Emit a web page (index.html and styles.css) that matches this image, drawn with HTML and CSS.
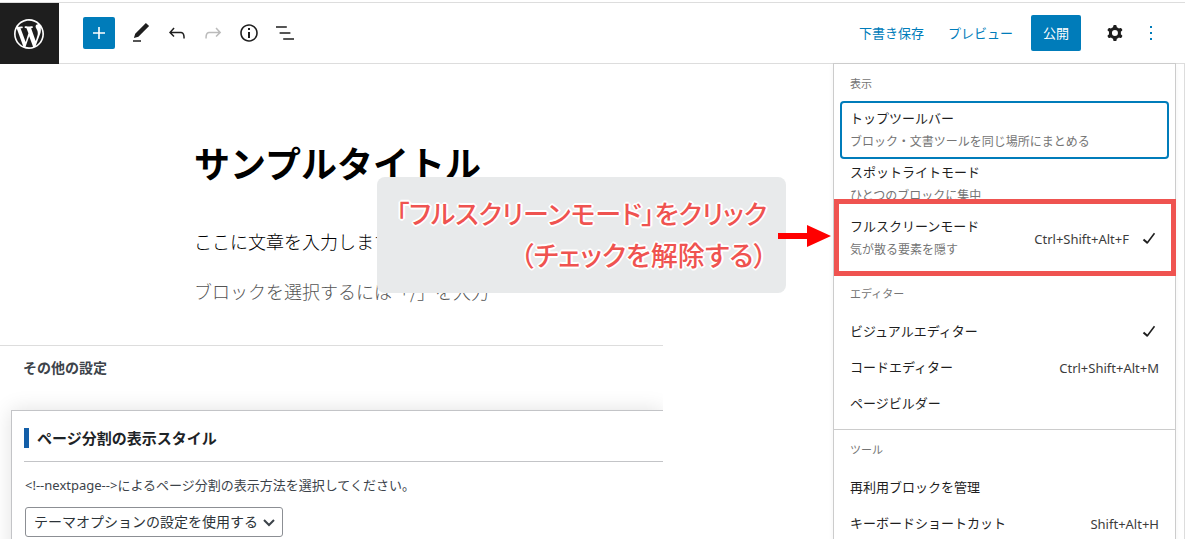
FILE: index.html
```html
<!DOCTYPE html>
<html lang="ja">
<head>
<meta charset="utf-8">
<meta name="viewport" content="width=device-width, initial-scale=1">
<title>サンプルタイトル</title>
<link rel="stylesheet" href="styles.css">
</head>
<body>
<header class="toolbar">
  <a class="logo" href="#" aria-label="WordPress">
    <svg width="36" height="36" viewBox="-2 -2 24 24" fill="currentColor"><path d="M20 10c0-5.51-4.49-10-10-10C4.48 0 0 4.49 0 10c0 5.52 4.48 10 10 10 5.51 0 10-4.48 10-10zM7.78 15.37L4.37 6.22c.55-.02 1.17-.08 1.17-.08.5-.06.44-1.13-.06-1.11 0 0-1.45.11-2.37.11-.18 0-.37 0-.58-.01C4.12 2.69 6.87 1.11 10 1.11c2.33 0 4.45.87 6.05 2.34-.68-.11-1.65.39-1.65 1.58 0 .74.45 1.36.9 2.1.35.61.55 1.36.55 2.46 0 1.49-1.4 5-1.4 5l-3.03-8.37c.54-.02.82-.17.82-.17.5-.05.44-1.25-.06-1.22 0 0-1.44.12-2.38.12-.87 0-2.33-.12-2.33-.12-.5-.03-.56 1.2-.06 1.22l.92.08 1.26 3.41zM17.41 10c.24-.64.74-1.87.43-4.25.7 1.29 1.05 2.71 1.05 4.25 0 3.29-1.73 6.24-4.4 7.78.97-2.59 1.94-5.2 2.92-7.78zM6.1 18.09C3.12 16.65 1.11 13.53 1.11 10c0-1.3.23-2.48.72-3.59C3.25 10.3 4.67 14.2 6.1 18.09zm4.03-6.63l2.58 6.98c-.86.29-1.76.45-2.71.45-.79 0-1.57-.11-2.29-.33.81-2.38 1.62-4.74 2.42-7.1z"/></svg>
  </a>
  <div class="tools">
    <button class="add" type="button" aria-label="ブロックを追加"><svg width="24" height="24" viewBox="0 0 24 24" fill="currentColor"><path d="M18 11.2h-5.2V6h-1.6v5.2H6v1.6h5.2V18h1.6v-5.2H18z"/></svg></button>
    <div class="group">
      <button class="icon" type="button" aria-label="ツール"><svg width="24" height="24" viewBox="0 0 24 24" fill="currentColor"><path d="M20.1 5.1L16.9 2 6.2 12.7l-1.3 4.4 4.5-1.3L20.1 5.1zM4 20.8h8v-1.5H4v1.5z"/></svg></button>
      <button class="icon" type="button" aria-label="元に戻す"><svg width="24" height="24" viewBox="0 0 24 24" fill="currentColor"><path d="M18.3 11.7c-.6-.6-1.4-.9-2.3-.9H6.7l2.9-3.3-1.1-1-4.5 5L8.5 16l1-1-2.7-2.7H16c.5 0 .9.2 1.3.5 1 1 1 3.4 1 4.5v.3h1.5v-.2c0-1.5 0-4.3-1.5-5.7z"/></svg></button>
      <button class="icon" type="button" aria-label="やり直す" disabled><svg width="24" height="24" viewBox="0 0 24 24" fill="currentColor"><path d="M15.6 6.5l-1.1 1 2.9 3.3H8c-.9 0-1.7.3-2.3.9-1.4 1.5-1.4 4.2-1.4 5.6v.2h1.5v-.3c0-1.1 0-3.5 1-4.5.3-.3.7-.5 1.3-.5h9.2L14.5 15l1.1 1.1 4.6-4.6-4.6-5z"/></svg></button>
      <button class="icon" type="button" aria-label="詳細"><svg width="24" height="24" viewBox="0 0 24 24" fill="currentColor"><path d="M12 3.2c-4.8 0-8.8 3.9-8.8 8.8 0 4.8 3.9 8.8 8.8 8.8 4.8 0 8.8-3.9 8.8-8.8 0-4.8-4-8.8-8.8-8.8zm0 16c-4 0-7.2-3.3-7.2-7.2C4.8 8 8 4.8 12 4.8s7.2 3.3 7.2 7.2c0 4-3.2 7.2-7.2 7.2zM11 17h2v-6h-2v6zm0-8h2V7h-2v2z"/></svg></button>
      <button class="icon" type="button" aria-label="リスト表示"><svg width="24" height="24" viewBox="0 0 24 24" fill="currentColor"><path d="M13.8 5.2H3v1.5h10.8V5.2zm-3.6 12v1.5H21v-1.5H10.2zm7.2-6H6.6v1.5h10.8v-1.5z"/></svg></button>
    </div>
  </div>
  <div class="actions">
    <button class="text-button" type="button">下書き保存</button>
    <button class="text-button" type="button">プレビュー</button>
    <button class="publish" type="button">公開</button>
    <div class="group">
      <button class="icon" type="button" aria-label="設定"><svg width="24" height="24" viewBox="0 0 24 24" fill="currentColor"><path fill-rule="evenodd" d="M10.289 4.836A1 1 0 0111.275 4h1.306a1 1 0 01.987.836l.244 1.466c.787.26 1.503.679 2.108 1.218l1.393-.522a1 1 0 011.216.437l.653 1.13a1 1 0 01-.23 1.273l-1.148.944a6.025 6.025 0 010 2.435l1.149.946a1 1 0 01.23 1.272l-.653 1.13a1 1 0 01-1.216.437l-1.394-.522c-.605.54-1.32.958-2.108 1.218l-.244 1.466a1 1 0 01-.987.836h-1.306a1 1 0 01-.986-.836l-.244-1.466a5.995 5.995 0 01-2.108-1.218l-1.394.522a1 1 0 01-1.217-.436l-.653-1.131a1 1 0 01.23-1.272l1.149-.946a6.026 6.026 0 010-2.435l-1.148-.944a1 1 0 01-.23-1.272l.653-1.131a1 1 0 011.217-.437l1.393.522a5.994 5.994 0 012.108-1.218l.244-1.466zM14.929 12a3 3 0 11-6 0 3 3 0 016 0z"/></svg></button>
      <button class="icon icon-active" type="button" aria-label="オプション" aria-expanded="true"><svg width="24" height="24" viewBox="0 0 24 24" fill="currentColor"><path d="M13 19h-2v-2h2v2zm0-6h-2v-2h2v2zm0-6h-2V5h2v2z"/></svg></button>
    </div>
  </div>
</header>

<main class="workspace">
  <article class="post">
    <h1 class="post-title">サンプルタイトル</h1>
    <p class="paragraph">ここに文章を入力します。</p>
    <p class="paragraph placeholder">ブロックを選択するには「/」を入力</p>
  </article>

  <section class="settings">
    <h2 class="settings-title">その他の設定</h2>
    <div class="panel">
      <h3 class="panel-title">ページ分割の表示スタイル</h3>
      <label class="description" for="paging">&lt;!--nextpage--&gt;によるページ分割の表示方法を選択してください。</label>
      <div class="select-wrap">
        <select class="select" id="paging"><option>テーマオプションの設定を使用する</option></select>
        <svg class="chevron" width="14" height="14" viewBox="0 0 14 14" fill="none" stroke="currentColor" stroke-width="2"><path d="M2 5l5 5 5-5"/></svg>
      </div>
    </div>
  </section>

  <div class="menu" role="menu">
    <section class="menu-section">
      <h2 class="menu-heading">表示</h2>
      <button class="item item-tall item-focus" type="button" role="menuitemcheckbox" aria-checked="false"><span class="item-text"><span>トップツールバー</span><span class="info">ブロック・文書ツールを同じ場所にまとめる</span></span></button>
      <button class="item item-tall" type="button" role="menuitemcheckbox" aria-checked="false"><span class="item-text"><span>スポットライトモード</span><span class="info">ひとつのブロックに集中</span></span></button>
      <button class="item item-tall item-marked" type="button" role="menuitemcheckbox" aria-checked="true"><span class="item-text"><span>フルスクリーンモード</span><span class="info">気が散る要素を隠す</span></span><span class="shortcut">Ctrl+Shift+Alt+F</span><svg class="check" width="20" height="20" viewBox="0 0 20 20" fill="none" stroke="currentColor"><path stroke-width="2" d="M4.5 11.5l4 3.5"/><path stroke-width="1.5" d="M8 15.2l7.5-10"/></svg></button>
    </section>
    <section class="menu-section">
      <h2 class="menu-heading">エディター</h2>
      <button class="item" type="button" role="menuitemradio" aria-checked="true"><span class="item-text">ビジュアルエディター</span><svg class="check" width="20" height="20" viewBox="0 0 20 20" fill="none" stroke="currentColor"><path stroke-width="2" d="M4.5 11.5l4 3.5"/><path stroke-width="1.5" d="M8 15.2l7.5-10"/></svg></button>
      <button class="item" type="button" role="menuitemradio" aria-checked="false"><span class="item-text">コードエディター</span><span class="shortcut">Ctrl+Shift+Alt+M</span></button>
      <button class="item" type="button" role="menuitem"><span class="item-text">ページビルダー</span></button>
    </section>
    <section class="menu-section">
      <h2 class="menu-heading">ツール</h2>
      <button class="item" type="button" role="menuitem"><span class="item-text">再利用ブロックを管理</span></button>
      <button class="item" type="button" role="menuitem"><span class="item-text">キーボードショートカット</span><span class="shortcut">Shift+Alt+H</span></button>
    </section>
  </div>

  <div class="callout">
    <p class="callout-line">「フルスクリーンモード」をクリック</p>
    <p class="callout-line callout-note">（チェックを解除する）</p>
    <svg class="arrow" width="53" height="22" viewBox="0 0 53 22" fill="#f00"><path d="M0 8h29V0l24 11-24 11v-8H0z"/></svg>
  </div>
</main>
</body>
</html>
```

FILE: styles.css
```css
* {
  box-sizing: border-box;
}

body {
  display: flex;
  flex-direction: column;
  height: 100vh;
  margin: 0;
  padding-top: 2px;
  overflow: hidden;
  background: #fff;
  color: #1e1e1e;
  font-family: "Noto Sans", "Noto Sans CJK JP", sans-serif;
  font-size: 13px;
}

h1,
h2,
h3,
p {
  margin: 0;
}

button {
  margin: 0;
  padding: 0;
  border: 0;
  background: none;
  color: inherit;
  font: inherit;
}

svg {
  display: block;
  flex: none;
}

.toolbar {
  display: flex;
  flex: none;
  height: 62px;
  border-top: 1px solid #ddd;
  border-bottom: 1px solid #ddd;
}

.logo {
  display: flex;
  align-items: center;
  width: 59px;
  height: 61px;
  padding-left: 11px;
  background: #1e1e1e;
  color: #fff;
}

.tools {
  display: flex;
  align-items: center;
  gap: 8px;
  padding-left: 24px;
}

.group {
  display: flex;
}

.add,
.icon {
  display: grid;
  place-items: center;
}

.add {
  width: 32px;
  height: 32px;
  border-radius: 2px;
  background: #007cba;
  color: #fff;
}

.icon {
  width: 36px;
  height: 36px;
}

.icon:disabled {
  color: #bbb;
}

.icon-active {
  color: #007cba;
}

.actions {
  display: flex;
  align-items: center;
  margin-left: auto;
  padding-right: 16px;
}

.text-button {
  margin-right: 24px;
  padding-bottom: 2px;
  color: #007cba;
}

.text-button + .publish {
  margin-left: -6px;
}

.publish {
  height: 36px;
  margin-right: 16px;
  padding: 0 12px 2px;
  border-radius: 2px;
  background: #007cba;
  color: #fff;
}

.workspace {
  position: relative;
  flex: 1;
  min-height: 0;
  border-right: 1px solid #ddd;
}

.post {
  height: 281px;
  padding: 73px 0 0 194px;
  color: #000;
}

.post-title {
  margin-bottom: 34px;
  font-size: 36px;
  line-height: 56px;
}

.paragraph {
  margin-bottom: 22px;
  font-family: "Noto Sans CJK JP", sans-serif;
  font-size: 18px;
  font-weight: 300;
  line-height: 28px;
}

.placeholder {
  color: #555;
}

.settings {
  width: 56%;
  overflow: hidden;
  border-top: 1px solid #ddd;
  color: #3c434a;
}

.settings-title {
  padding: 10px 23px 30px;
  font-size: 14px;
  line-height: 24px;
}

.panel {
  margin-left: 11px;
  padding: 15px 0 24px 12px;
  border: 1px solid #c3c4c7;
  border-right: 0;
  box-shadow: 0 0 20px rgba(0, 0, 0, 0.12);
}

.panel-title {
  display: flex;
  align-items: center;
  gap: 8px;
  padding-bottom: 11px;
  border-bottom: 1px solid #c3c4c7;
  color: #1d2327;
  font-size: 15px;
  line-height: 24px;
}

.panel-title::before {
  width: 5px;
  height: 20px;
  background: #135ea8;
  content: "";
}

.description {
  display: block;
  padding: 11px 0 10px 1px;
  line-height: 24px;
}

.select-wrap {
  position: relative;
  width: 258px;
  margin-left: 1px;
}

.select {
  appearance: none;
  width: 100%;
  height: 30px;
  padding: 0 24px 2px 8px;
  border: 1px solid #8c8f94;
  border-radius: 3px;
  background: #fff;
  color: #2c3338;
  font: inherit;
  font-size: 14px;
}

.chevron {
  position: absolute;
  top: 8px;
  right: 7px;
  pointer-events: none;
}

.menu {
  position: absolute;
  top: -1px;
  right: 8px;
  width: 343px;
  border: 1px solid #ccc;
  background: #fff;
  box-shadow: 0 2px 6px rgba(0, 0, 0, 0.05);
}

.menu-section {
  padding: 9px 8px 8px;
}

.menu-section + .menu-section {
  border-top: 1px solid #ccc;
}

.menu-heading {
  margin-bottom: 8px;
  padding-left: 8px;
  color: #757575;
  font-size: 11px;
  font-weight: 400;
  line-height: 22px;
}

.item {
  position: relative;
  display: flex;
  align-items: center;
  gap: 10px;
  width: 100%;
  height: 36px;
  padding: 0 8px;
  border-radius: 2px;
  line-height: 23px;
  text-align: left;
}

.item-tall {
  height: 54px;
}

.item-focus {
  box-shadow: 0 0 0 2px #007cba;
}

.item-text {
  display: flex;
  flex: 1;
  flex-direction: column;
}

.info {
  color: #757575;
  font-size: 12px;
}

.shortcut {
  padding-top: 2px;
  color: #3c3c3c;
}

.item-marked::after {
  position: absolute;
  inset: -12px -9px -11px -8px;
  border: 5px solid #ef5350;
  content: "";
}

.callout {
  position: absolute;
  top: 113px;
  right: 398px;
  width: 409px;
  padding: 15px 19px 17px;
  border-radius: 8px;
  background: #e8eaeb;
}

.callout-line {
  color: #ef5350;
  font-family: "Noto Sans CJK JP", sans-serif;
  font-feature-settings: "palt";
  font-size: 26px;
  font-weight: 500;
  line-height: 42px;
  text-align: right;
  text-shadow: 2px 0 #fff, -2px 0 #fff, 0 2px #fff, 0 -2px #fff, 1px 1px #fff, -1px -1px #fff, 1px -1px #fff, -1px 1px #fff;
  white-space: nowrap;
}

.callout-note {
  font-size: 27px;
}

.arrow {
  position: absolute;
  top: 48px;
  right: -45px;
}
```
